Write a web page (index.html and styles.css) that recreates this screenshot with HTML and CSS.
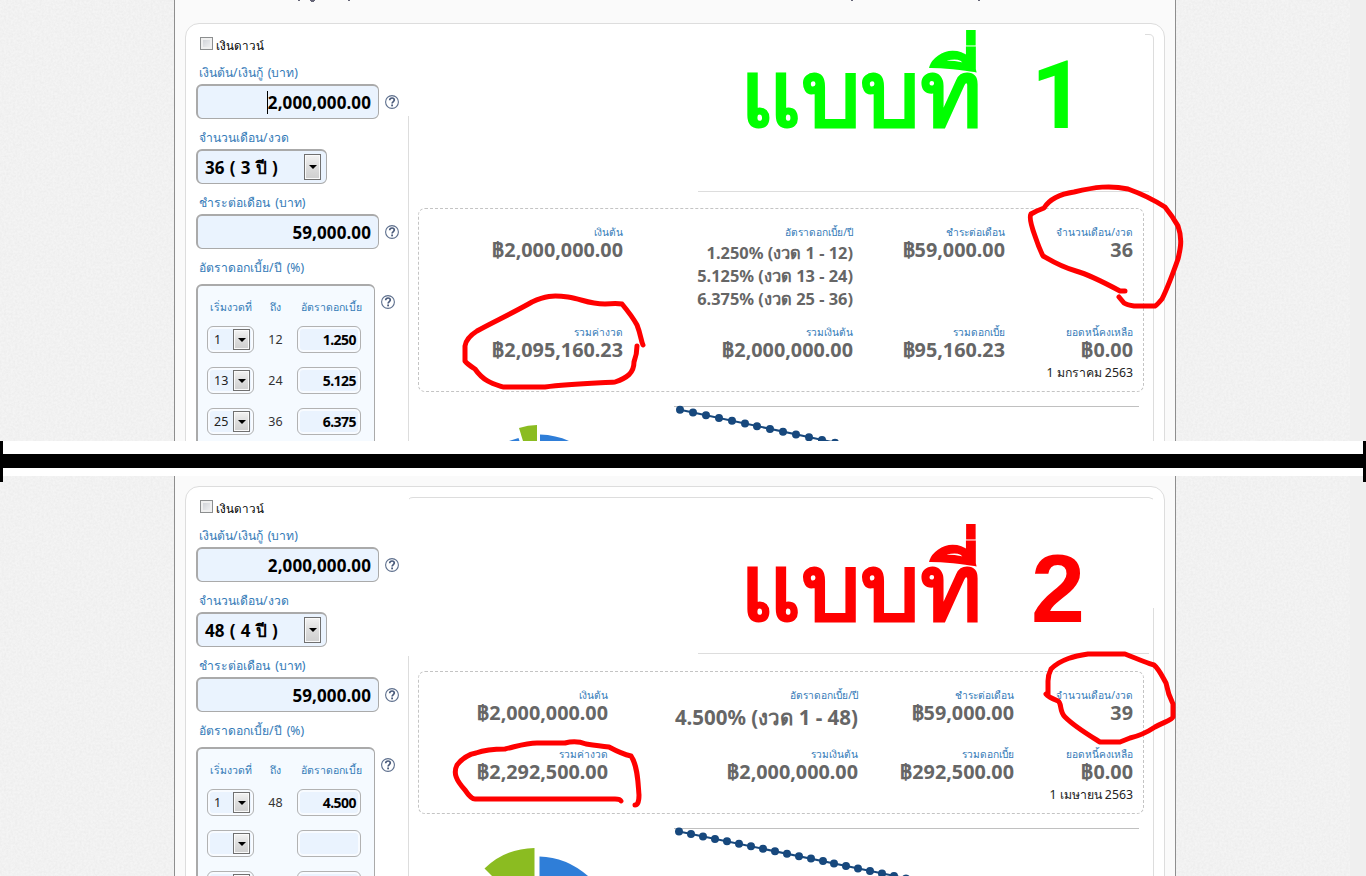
FILE: index.html
```
<!DOCTYPE html>
<html lang="th">
<head>
<meta charset="utf-8">
<title>แบบที่ 1 / แบบที่ 2</title>
<link rel="stylesheet" href="styles.css">
</head>
<body>
<svg class="defs" width="0" height="0" aria-hidden="true">
  <symbol id="help" viewBox="0 0 14 14"><circle cx="7" cy="7" r="6.4" fill="#fff" stroke="#5d6f8d" stroke-width="1.1"/><path d="M4.700 5.300C4.700 3.700 5.600 3 7 3S9.300 3.800 9.300 5.100C9.300 6.600 7.200 6.600 7.100 8.500" fill="none" stroke="#4a5b7b" stroke-width="1.700"/><rect x="6.200" y="9.500" width="1.800" height="1.800" fill="#4a5b7b"/></symbol>
  <filter id="grain" x="0" y="0" width="100%" height="100%"><feTurbulence type="fractalNoise" baseFrequency=".45" numOctaves="3" seed="4"/><feColorMatrix values="0 0 0 0 .5  0 0 0 0 .5  0 0 0 0 .5  .22 0 0 0 -.06"/></filter>
</svg>

<section class="shot shot-a">
  <svg class="grain" width="1366" height="441"><rect width="1350" height="441" filter="url(#grain)"/></svg>
  <main class="page">
    <div class="card">
      <form class="form">
        <label class="check"><i></i><span>เงินดาวน์</span></label>
        <div class="label">เงินต้น/เงินกู้ (บาท)</div>
        <div class="row"><div class="field caret"><span>2,000,000.00</span></div><svg class="help"><use href="#help"/></svg></div>
        <div class="label">จำนวนเดือน/งวด</div>
        <div class="row"><div class="field select"><span>36 ( 3 ปี )</span><b class="arrow"></b></div></div>
        <div class="label">ชำระต่อเดือน (บาท)</div>
        <div class="row"><div class="field"><span>59,000.00</span></div><svg class="help"><use href="#help"/></svg></div>
        <div class="label">อัตราดอกเบี้ย/ปี (%)</div>
        <div class="row top">
          <div class="rates">
            <span class="th">เริ่มงวดที่</span><span class="th">ถึง</span><span class="th">อัตราดอกเบี้ย</span>
            <div class="mini"><span>1</span><b class="arrow"></b></div><span class="to">12</span><div class="rate"><span>1.250</span></div>
            <div class="mini"><span>13</span><b class="arrow"></b></div><span class="to">24</span><div class="rate"><span>5.125</span></div>
            <div class="mini"><span>25</span><b class="arrow"></b></div><span class="to">36</span><div class="rate"><span>6.375</span></div>
          </div>
          <svg class="help"><use href="#help"/></svg>
        </div>
      </form>
      <div class="result">
        <div class="summary">
          <div class="cell"><span class="cap">เงินต้น</span><span class="val">฿2,000,000.00</span></div>
          <div class="cell"><span class="cap">อัตราดอกเบี้ย/ปี</span><span class="per">1.250% (งวด 1 - 12)</span><span class="per">5.125% (งวด 13 - 24)</span><span class="per">6.375% (งวด 25 - 36)</span></div>
          <div class="cell"><span class="cap">ชำระต่อเดือน</span><span class="val">฿59,000.00</span></div>
          <div class="cell"><span class="cap">จำนวนเดือน/งวด</span><span class="val">36</span></div>
          <div class="cell"><span class="cap">รวมค่างวด</span><span class="val">฿2,095,160.23</span></div>
          <div class="cell"><span class="cap">รวมเงินต้น</span><span class="val">฿2,000,000.00</span></div>
          <div class="cell"><span class="cap">รวมดอกเบี้ย</span><span class="val">฿95,160.23</span></div>
          <div class="cell"><span class="cap">ยอดหนี้คงเหลือ</span><span class="val">฿0.00</span><span class="date">1 มกราคม 2563</span></div>
        </div>
      </div>
    </div>
  </main>
  <svg class="ink" width="1366" height="441" viewBox="0 0 1366 441">
    <g fill="#667"><rect x="298" y="0" width="2" height="1"/><path d="M310 0h5v1h-1v1h-3v-1h-1z"/><rect x="348" y="0" width="2" height="1"/><rect x="851" y="0" width="2" height="1"/><rect x="978" y="0" width="2" height="1"/></g>
    <g class="rule"><path d="M408.500 116V441"/><path d="M1145 34.500H1149Q1153.500 34.500 1153.500 39V441"/><path d="M698 191.500H1149"/></g>
    <path class="axis" d="M674 406.500H1139"/>
    <path fill="#8bbc21" d="M519 428Q528 425 537 425V441H523Z"/><path fill="#2f7ed8" d="M540 434.500Q556 435 569 441H540ZM509 441 518.500 438 519.500 441Z"/>
    <path class="series" d="M680 409.700 848.400 445.500"/>
    <path class="dots" d="M680 409.700h0M693 412.500h0M706 415.200h0M719 418h0M732 420.700h0M745 423.500h0M757 426.200h0M770 429h0M783 431.700h0M796 434.600h0M809 437.300h0M822 440h0M835 442.700h0"/>
    <text class="title green" x="740" y="126" textLength="243" lengthAdjust="spacingAndGlyphs">แบบที่</text><text class="title green one" x="1031" y="128">1</text>
    <path class="pen" d="M643 345C641 341 641 335 637 325Q632 316 622 304Q617 303 605 304C588 304 582 299 568 297C552 295 545 296 532 302C511 314 491 323 477 331Q466 338 465 346V361Q467 364 475 369C484 382 494 384 503 387H545C570 384 600 383 615 382C627 378 634 373 634 362Q637 354 637 346"/>
    <path class="pen" d="M1125 291H1120C1107 284 1090 275 1076 271C1061 267 1050 260 1043 256Q1039 248 1035 236C1031 225 1029 217 1031 214Q1036 211 1044 208C1049 200 1060 194 1074 192C1095 187 1110 185 1128 189C1142 194 1154 200 1165 207Q1173 217 1178 226C1183 240 1180 250 1178 259C1172 276 1168 287 1162 299Q1157 305 1155 306H1134Q1127 305 1124 303L1119 297"/>
  </svg>
</section>

<div class="divider"><i></i></div>

<section class="shot shot-b">
  <svg class="grain" width="1366" height="400"><rect width="1350" height="400" filter="url(#grain)"/></svg>
  <main class="page">
    <div class="card">
      <form class="form">
        <label class="check"><i></i><span>เงินดาวน์</span></label>
        <div class="label">เงินต้น/เงินกู้ (บาท)</div>
        <div class="row"><div class="field"><span>2,000,000.00</span></div><svg class="help"><use href="#help"/></svg></div>
        <div class="label">จำนวนเดือน/งวด</div>
        <div class="row"><div class="field select"><span>48 ( 4 ปี )</span><b class="arrow"></b></div></div>
        <div class="label">ชำระต่อเดือน (บาท)</div>
        <div class="row"><div class="field"><span>59,000.00</span></div><svg class="help"><use href="#help"/></svg></div>
        <div class="label">อัตราดอกเบี้ย/ปี (%)</div>
        <div class="row top">
          <div class="rates">
            <span class="th">เริ่มงวดที่</span><span class="th">ถึง</span><span class="th">อัตราดอกเบี้ย</span>
            <div class="mini"><span>1</span><b class="arrow"></b></div><span class="to">48</span><div class="rate"><span>4.500</span></div>
            <div class="mini"><span></span><b class="arrow"></b></div><span class="to"></span><div class="rate"></div>
            <div class="mini"><span></span><b class="arrow"></b></div><span class="to"></span><div class="rate"></div>
          </div>
          <svg class="help"><use href="#help"/></svg>
        </div>
      </form>
      <div class="result">
        <div class="summary">
          <div class="cell"><span class="cap">เงินต้น</span><span class="val">฿2,000,000.00</span></div>
          <div class="cell"><span class="cap">อัตราดอกเบี้ย/ปี</span><span class="val low">4.500% (งวด 1 - 48)</span></div>
          <div class="cell"><span class="cap">ชำระต่อเดือน</span><span class="val">฿59,000.00</span></div>
          <div class="cell"><span class="cap">จำนวนเดือน/งวด</span><span class="val">39</span></div>
          <div class="cell"><span class="cap">รวมค่างวด</span><span class="val">฿2,292,500.00</span></div>
          <div class="cell"><span class="cap">รวมเงินต้น</span><span class="val">฿2,000,000.00</span></div>
          <div class="cell"><span class="cap">รวมดอกเบี้ย</span><span class="val">฿292,500.00</span></div>
          <div class="cell"><span class="cap">ยอดหนี้คงเหลือ</span><span class="val">฿0.00</span><span class="date">1 เมษายน 2563</span></div>
        </div>
      </div>
    </div>
  </main>
  <svg class="ink" width="1366" height="400" viewBox="0 476 1366 400">
    <g class="rule"><path d="M408.500 656V876"/><path d="M409 499Q410 497.500 413 497.500H1149L1153 499M1153.500 608V876M698 653.500H1149"/></g>
    <path class="axis" d="M674 828.500H1139"/>
    <path fill="#8bbc21" d="M484.500 868.500Q505 848.500 534.500 848V876H492Z"/><path fill="#2f7ed8" d="M539.500 856.500Q566 857 588 876H539.500Z"/>
    <path class="series" d="M679 831.500 919 881"/>
    <path class="dots" d="M679 831.500h0M691 833.900h0M703 836.400h0M715 838.900h0M727 841.300h0M739 843.800h0M751 846.300h0M763 848.800h0M775 851.200h0M787 853.700h0M799 856.200h0M811 858.600h0M823 861.100h0M834 863.600h0M846 866h0M858 868.600h0M870 871h0M882 873.500h0M894 876h0M906 878.400h0"/>
    <text class="title red" x="740" y="620" textLength="243" lengthAdjust="spacingAndGlyphs">แบบที่</text><text class="title red two" x="1031" y="622">2</text>
    <path class="pen" d="M621 801Q620 799 615 799H475Q471 799 465 790C456 780 453 773 457 765Q465 755 476 753Q487 749 505 749C518 746 526 743 537 743H565Q576 740 586 744Q600 746 609 747Q622 754 631 756C638 766 638 784 639 795Q639 805 635 805"/>
    <path class="pen" d="M1046 694Q1048 697 1058 701C1062 703 1059 711 1065 717C1075 727 1087 734 1100 742H1120Q1125 740 1130 738Q1143 735 1155 727C1164 722 1172 720 1173 717V704Q1168 694 1166 683C1162 676 1159 669 1154 665Q1147 663 1125 654H1088C1075 656 1061 659 1051 669Q1048 675 1048 681V695"/>
  </svg>
</section>
</body>
</html>
```

FILE: styles.css
```
* { box-sizing: border-box; }
body { margin: 0; width: 1366px; height: 876px; overflow: hidden; background: #fff; font-family: "Noto Sans", sans-serif; font-size: 12px; color: #222; }
.defs { position: absolute; }
.shot { position: relative; overflow: hidden; background: #efefef; }
.shot-a { height: 441px; }
.shot-b { height: 400px; }
.grain, .ink { position: absolute; left: 0; top: 0; pointer-events: none; }
.grain { background: linear-gradient(90deg, #f4f4f4 1350px, #efefef 1350px); }
.page { position: relative; width: 1002px; height: 100%; margin-left: 174px; padding: 23px 10px 0; background: #fafafa; border: solid #8e8e8e; border-width: 0 1px; }
.shot-b .page { padding-top: 10px; }
.card { display: flex; height: 600px; border: 1px solid #ddd; border-radius: 14px; background: #fff; }
.form { width: 222px; flex: none; padding: 10px 0 0 10px; }
.check { display: flex; align-items: center; height: 28px; padding: 0 0 8px 4px; gap: 3px; color: #000; font-size: 11.700px; }
.check i { width: 13px; height: 13px; margin-top: -1px; border: 1px solid #8c8e8f; background: linear-gradient(135deg, #cacdd3, #f6f6f6); box-shadow: inset 0 0 0 2px #f0f0f0; }
.check span { margin-top: 3px; }
.label { height: 22px; line-height: 22px; padding-left: 3px; color: #337ab7; white-space: nowrap; font-size: 12.200px; word-spacing: 2px; }
.row { display: flex; align-items: center; gap: 6px; margin-bottom: 8px; }
.row.top { align-items: flex-start; margin-top: 5px; }
.field { display: flex; align-items: center; justify-content: flex-end; width: 183px; height: 35px; padding: 0 7px 0; border: 1px solid #aaa; border-width: 2px 1px 1px 2px; border-radius: 6px; background: #eaf3fe; font-size: 17px; letter-spacing: .1px; font-weight: 700; color: #000; white-space: nowrap; }
.caret span { border-left: 1px solid #000; margin-left: -1px; }
.select { width: 131px; justify-content: space-between; padding: 0 5px 0 7px; }
.select span { word-spacing: .6px; }
.help { width: 14px; height: 14px; flex: none; }
.top .help { margin-top: 11px; }
.arrow { display: flex; align-items: center; justify-content: center; flex: none; width: 17px; height: 26px; border: 1px solid #707070; background: linear-gradient(#f3f3f3, #ddd 50%, #cfcfcf); box-shadow: inset 0 0 0 1px #fafafa; }
.arrow::after { content: ""; border: 4px solid transparent; border-top-color: #000; border-bottom: 0; }
.rates { display: grid; grid-template-columns: 47px 43px 64px; grid-template-rows: 26px repeat(3, 27px); row-gap: 14px; align-items: center; width: 179px; height: 270px; align-content: start; padding: 0 0 0 9px; border: 2px solid #aaa; border-right-width: 1px; border-radius: 6px; background: #f5faff; }
.th { height: 20px; line-height: 20px; margin-top: 16px; text-align: center; color: #337ab7; font-size: 10.500px; white-space: nowrap; }
.th:nth-child(3) { margin-right: -4px; }
.to { text-align: center; font-size: 12.500px; color: #333; }
.mini, .rate { display: flex; align-items: center; height: 27px; border: 1px solid #b2b2b2; border-radius: 6px; background: #eaf3fe; box-shadow: inset 0 0 0 2px #f8fbff; }
.mini { justify-content: space-between; padding: 0 3px 0 6px; font-size: 12.500px; }
.mini .arrow { height: 21px; }
.rate { justify-content: flex-end; padding-right: 4px; font-size: 14px; letter-spacing: -.55px; font-weight: 700; color: #000; }
.result { padding: 184px 0 0 10px; }
.summary { display: grid; grid-template-columns: 204px 230px 152px 128px; grid-template-rows: 100px 60px; align-content: start; width: 726px; height: 184px; padding-top: 15px; border: 1px dashed #c4c4c4; border-radius: 7px; text-align: right; }
.shot-b .summary { grid-template-columns: 189px 250px 156px 119px; grid-template-rows: 59px 60px; height: 143px; }
.cell { display: flex; flex-direction: column; white-space: nowrap; }
.cap { height: 16px; line-height: 16px; font-size: 10.200px; color: #337ab7; }
.val { height: 20px; line-height: 19px; font-size: 19.800px; font-weight: 700; color: #666; }
.low { margin-top: 5px; font-size: 20.500px; }
.per { height: 23px; line-height: 25px; font-size: 16.400px; font-weight: 700; color: #666; }
.date { height: 24px; line-height: 26px; color: #222; font-size: 12.300px; }
.divider { display: flex; align-items: center; height: 35px; position: relative; }
.divider i { width: 100%; height: 14px; margin-top: 5px; background: #000; }
.divider::before, .divider::after { content: ""; position: absolute; z-index: 2; top: 0; width: 3px; height: 41px; background: #000; }
.divider::before { left: 0; }
.divider::after { right: 0; }
.rule { fill: none; stroke: #ddd; }
.axis { stroke: #c0c0c0; }
.series { fill: none; stroke: #17487d; stroke-width: 2; }
.dots { stroke: #17487d; stroke-width: 8; stroke-linecap: round; }
.pen { fill: none; stroke: #f00; stroke-width: 5; stroke-linecap: round; stroke-linejoin: round; }
.title { font: 700 92px "Liberation Sans", sans-serif; }
.one { font: 700 94px Roboto, sans-serif; }
.two { font-size: 97px; }
.green { fill: #0f0; }
.red { fill: #f00; }
```
